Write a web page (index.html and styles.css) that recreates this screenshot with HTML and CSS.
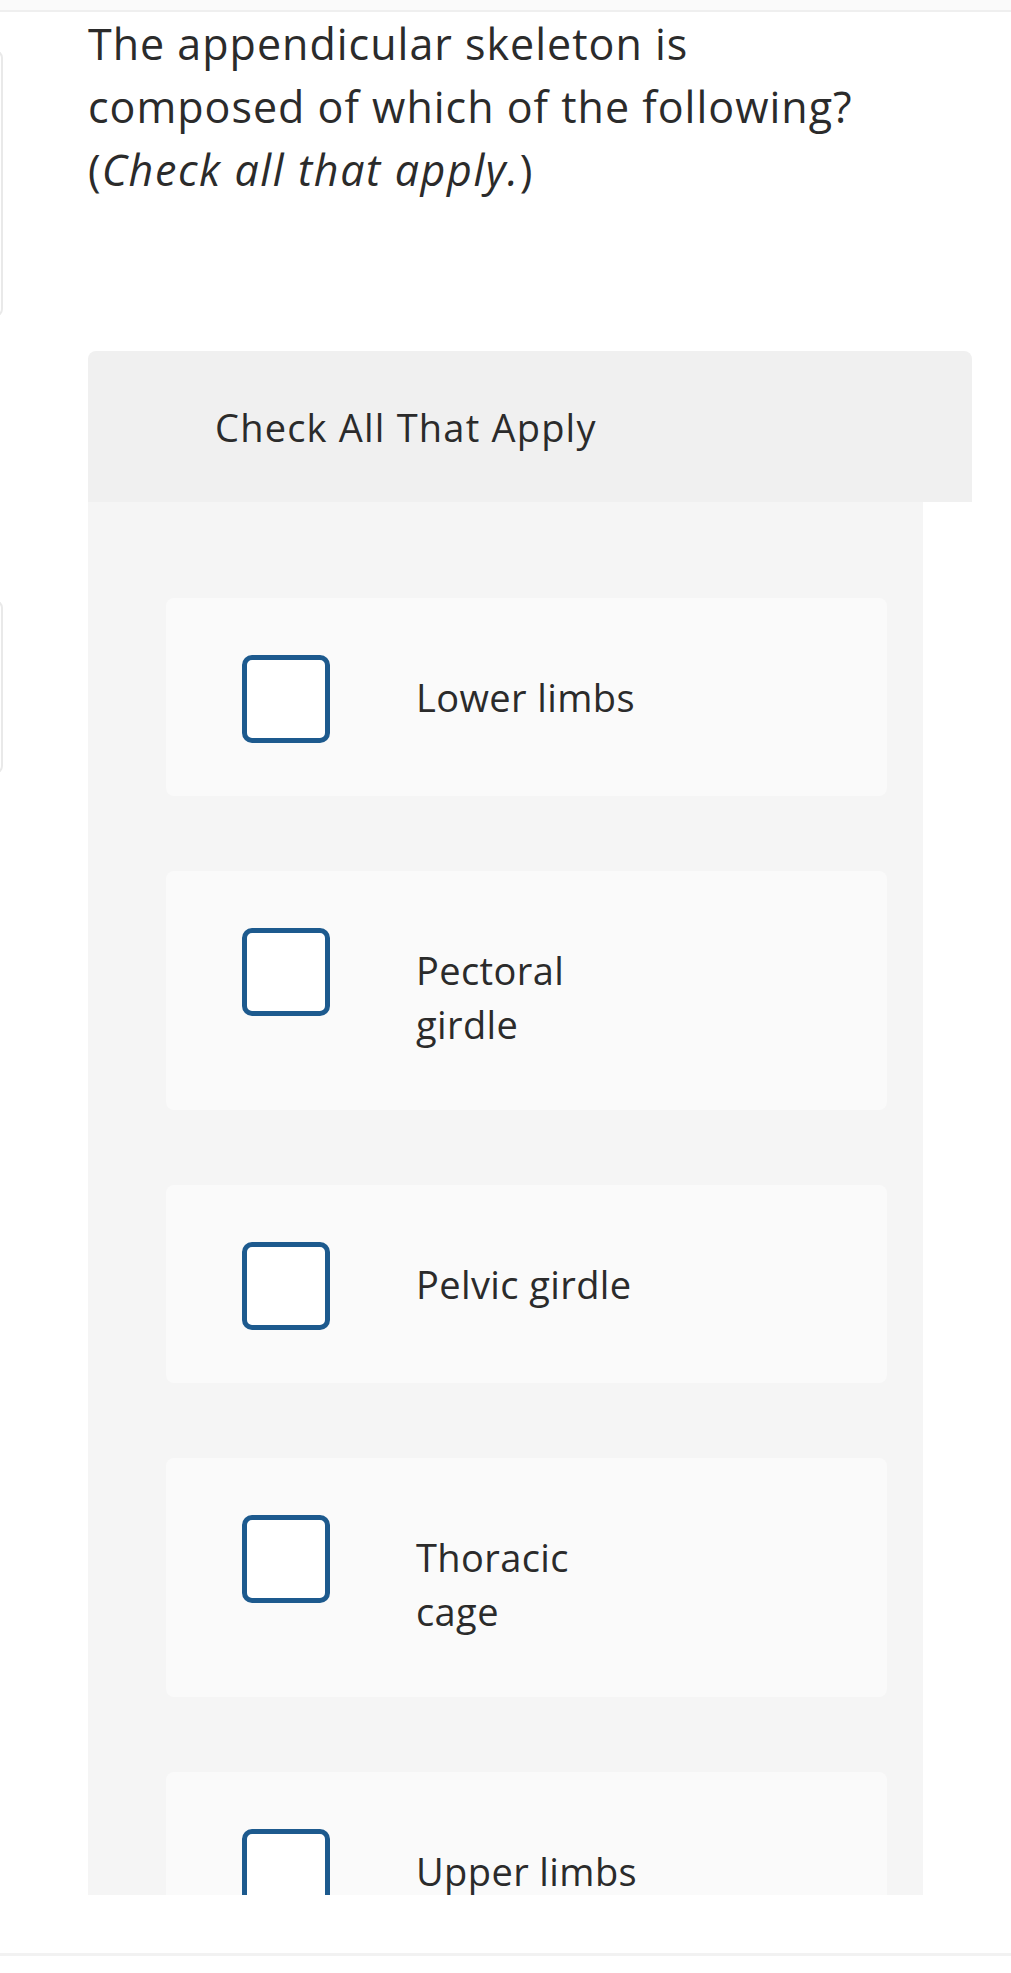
FILE: index.html
```html
<!DOCTYPE html>
<html lang="en">
<head>
<meta charset="utf-8">
<title>Check All That Apply</title>
<link rel="stylesheet" href="styles.css">
</head>
<body>
<div class="topbar"></div>
<div class="layout">
  <aside class="rail">
    <div class="rail-card rail-card-a"></div>
    <div class="rail-card rail-card-b"></div>
  </aside>
  <main class="main">
    <p class="question">The appendicular skeleton is composed of which of the following? (<em>Check all that apply.</em>)</p>
    <section class="panel">
      <div class="panel-head">Check All That Apply</div>
      <div class="panel-body">
        <label class="choice"><span class="box"></span><span class="text">Lower limbs</span></label>
        <label class="choice"><span class="box"></span><span class="text">Pectoral girdle</span></label>
        <label class="choice"><span class="box"></span><span class="text">Pelvic girdle</span></label>
        <label class="choice"><span class="box"></span><span class="text">Thoracic cage</span></label>
        <label class="choice"><span class="box"></span><span class="text">Upper limbs</span></label>
      </div>
    </section>
  </main>
</div>
<div class="footer"></div>
</body>
</html>
```
FILE: styles.css
```css
* { box-sizing: border-box; }
html, body { margin: 0; padding: 0; background: #ffffff; }
body {
  font-family: "Open Sans", Lato, sans-serif;
  color: #2b2b2b;
  overflow-x: hidden;
}
.topbar {
  height: 12px;
  background: #fafafa;
  border-bottom: 2px solid #efefef;
}
.layout {
  display: grid;
  grid-template-columns: 3px 1fr;
}
.rail { display: flex; flex-direction: column; }
.rail-card {
  width: 40px;
  margin-left: -37px;
  border: 2px solid #e9e9e9;
  border-radius: 8px;
  background: #ffffff;
}
.rail-card-a { margin-top: 38px; height: 267px; }
.rail-card-b { margin-top: 283px; height: 174px; }
.main { padding-left: 85px; }
.question {
  margin: 0;
  width: 776px;
  font-size: 43px;
  line-height: 63px;
  letter-spacing: 1px;
  color: #2b2b2b;
}
.question em { font-style: italic; letter-spacing: 1.6px; }
.panel { margin-top: 150px; width: 884px; }
.panel-head {
  height: 151px;
  background: #f0f0f0;
  border-radius: 8px 8px 0 0;
  padding-left: 127px;
  display: flex;
  align-items: center;
  font-size: 38px;
  letter-spacing: 1.2px;
}
.panel-body {
  width: 835px;
  height: 1393px;
  overflow: hidden;
  background: #f5f5f5;
  padding: 96px 36px 0 78px;
  display: flex;
  flex-direction: column;
  gap: 75px;
}
.choice {
  flex: none;
  display: flex;
  align-items: flex-start;
  gap: 86px;
  background: #fafafa;
  border-radius: 8px;
  padding: 57px 20px 53px 76px;
  cursor: pointer;
}
.box {
  flex: none;
  width: 88px;
  height: 88px;
  border: 5.5px solid #1d5a8e;
  border-radius: 10px;
  background: #ffffff;
}
.text {
  width: 240px;
  padding: 15px 0 6px;
  font-size: 38px;
  line-height: 54px;
  letter-spacing: 0.4px;
  color: #2b2b2b;
}
.footer {
  margin-top: 58px;
  border-top: 3px solid #f2f2f2;
  height: 30px;
}
```
